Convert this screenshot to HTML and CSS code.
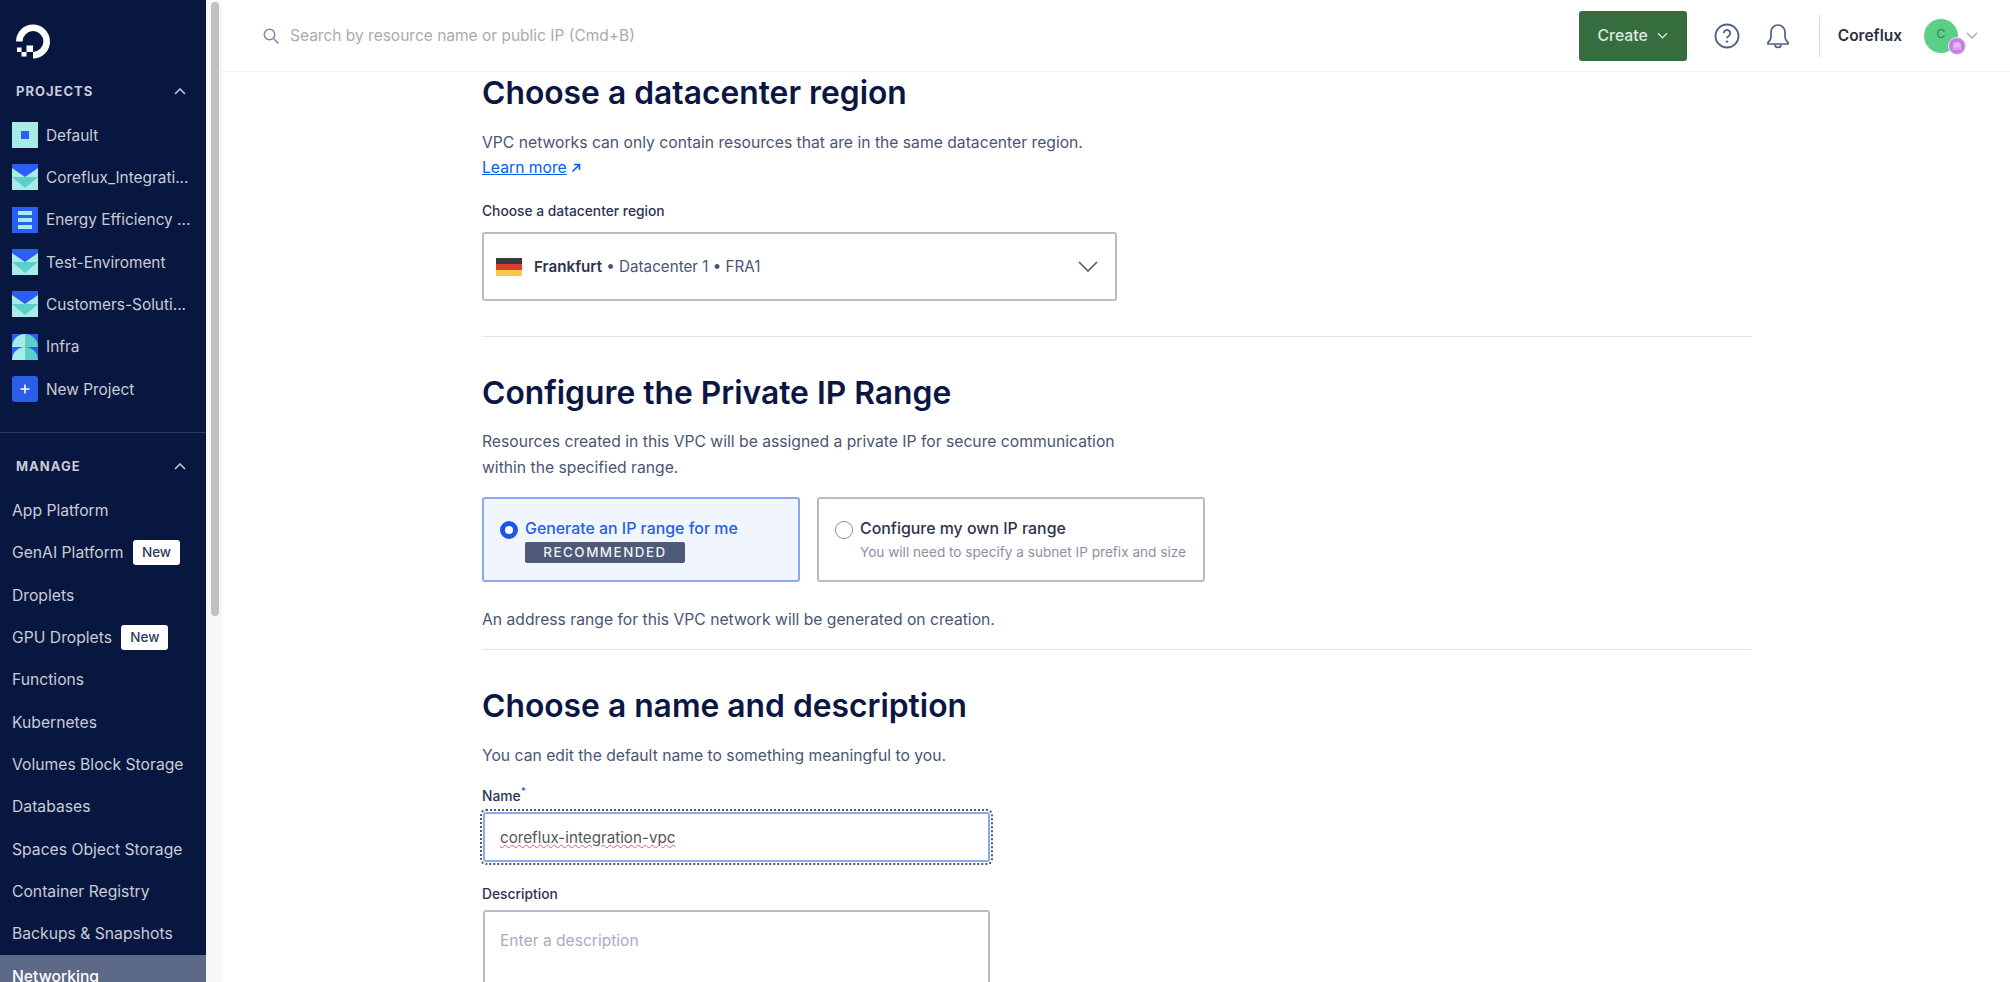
FILE: index.html
```html
<!DOCTYPE html>
<html lang="en">
<head>
    <meta charset="UTF-8">
    <meta name="viewport" content="width=device-width, initial-scale=1.0">
    <title>Create a VPC Network</title>
    <link rel="stylesheet" href="styles.css">
</head>
<body>
    <aside class="sidebar">
        <div class="logo">
            <svg width="34" height="35" viewBox="0 0 34 34"><path d="M17 34v-6.6A10.4 10.4 0 1 0 6.6 17H0a17 17 0 1 1 17 17z" fill="#fff"/><path d="M10.5 21h6.5v6.4h-6.5zM5.5 27.4h5v4.6h-5zM1 23h4.500v4.400H1z" fill="#fff"/></svg>
        </div>

        <section class="side-section side-projects">
            <div class="side-head">
                <span>PROJECTS</span>
                <svg class="side-chevron" width="12" height="7" viewBox="0 0 12 7"><path d="M1 6l5-5 5 5" fill="none" stroke="#c9ccd6" stroke-width="1.5"/></svg>
            </div>
            <a class="project">
                <svg class="project-icon" viewBox="0 0 26 26"><rect width="26" height="26" fill="#a8ece8"/><rect x="9" y="9" width="8" height="8" fill="#2a5ef5"/></svg>
                <span>Default</span>
            </a>
            <a class="project">
                <svg class="project-icon" viewBox="0 0 26 26"><rect width="26" height="26" fill="#a8ece8"/><path d="M0 0h26v4L13 13 0 4z" fill="#2a5ef5"/><path d="M0 13h26L13 24z" fill="#5ccfc8"/></svg>
                <span>Coreflux_Integrati...</span>
            </a>
            <a class="project">
                <svg class="project-icon" viewBox="0 0 26 26"><rect width="26" height="26" fill="#2a5ef5"/><path d="M6 4h14v4H6zM6 11h14v4H6zM6 18h14v4H6z" fill="#a8ece8"/></svg>
                <span>Energy Efficiency ...</span>
            </a>
            <a class="project">
                <svg class="project-icon" viewBox="0 0 26 26"><rect width="26" height="26" fill="#a8ece8"/><path d="M0 0h26v4L13 13 0 4z" fill="#2a5ef5"/><path d="M0 13h26L13 24z" fill="#5ccfc8"/></svg>
                <span>Test-Enviroment</span>
            </a>
            <a class="project">
                <svg class="project-icon" viewBox="0 0 26 26"><rect width="26" height="26" fill="#a8ece8"/><path d="M0 0h26v4L13 13 0 4z" fill="#2a5ef5"/><path d="M0 13h26L13 24z" fill="#5ccfc8"/></svg>
                <span>Customers-Soluti...</span>
            </a>
            <a class="project">
                <svg class="project-icon" viewBox="0 0 26 26"><rect width="26" height="26" fill="#2a5ef5"/><path d="M13 0A13 13 0 0 0 0 13h13z" fill="#a8ece8"/><path d="M13 0a13 13 0 0 1 13 13H13z" fill="#5ccfc8"/><path d="M0 26a13 13 0 0 1 13-13v13z" fill="#a8ece8"/><path d="M13 13a13 13 0 0 1 13 13H13z" fill="#5ccfc8"/></svg>
                <span>Infra</span>
            </a>
            <a class="project">
                <svg class="project-icon" viewBox="0 0 26 26"><rect width="26" height="26" rx="3" fill="#2a5ee8"/><path d="M13 8.500v9M8.500 13h9" stroke="#fff" stroke-width="1.6"/></svg>
                <span>New Project</span>
            </a>
        </section>

        <section class="side-section side-manage">
            <div class="side-head">
                <span>MANAGE</span>
                <svg class="side-chevron" width="12" height="7" viewBox="0 0 12 7"><path d="M1 6l5-5 5 5" fill="none" stroke="#c9ccd6" stroke-width="1.5"/></svg>
            </div>
            <a class="nav-item">App Platform</a>
            <a class="nav-item">GenAI Platform <span class="badge-new">New</span></a>
            <a class="nav-item">Droplets</a>
            <a class="nav-item">GPU Droplets <span class="badge-new">New</span></a>
            <a class="nav-item">Functions</a>
            <a class="nav-item">Kubernetes</a>
            <a class="nav-item">Volumes Block Storage</a>
            <a class="nav-item">Databases</a>
            <a class="nav-item">Spaces Object Storage</a>
            <a class="nav-item">Container Registry</a>
            <a class="nav-item">Backups &amp; Snapshots</a>
            <a class="nav-item active">Networking</a>
        </section>
    </aside>

    <div class="gutter"><div class="gutter-thumb"></div></div>

    <div class="main">
        <header class="topbar">
            <div class="search">
                <svg width="18" height="18" viewBox="0 0 18 18"><circle cx="7.500" cy="7.500" r="5.200" fill="none" stroke="#7a88aa" stroke-width="1.5"/><path d="M11.500 11.500l5 5" stroke="#7a88aa" stroke-width="1.5"/></svg>
                <span>Search by resource name or public IP (Cmd+B)</span>
            </div>
            <button class="create-btn">Create
                <svg width="11" height="7" viewBox="0 0 12 7"><path d="M1 1l5 5 5-5" fill="none" stroke="#d8e4da" stroke-width="1.4"/></svg>
            </button>
            <svg class="help-icon" width="26" height="26" viewBox="0 0 26 26"><circle cx="13" cy="13" r="11.500" fill="none" stroke="#4e5f85" stroke-width="1.8"/><path d="M9.800 10.200a3.200 3.200 0 1 1 4.900 2.700c-1.100.7-1.700 1.200-1.700 2.400" fill="none" stroke="#4e5f85" stroke-width="1.8"/><circle cx="13" cy="18.600" r="1.200" fill="#4e5f85"/></svg>
            <svg class="bell-icon" width="24" height="26" viewBox="0 0 24 26"><path d="M12 2a7 7 0 0 0-7 7v5c0 2.500-1.500 3.800-3 5.500V21h20v-1.500c-1.500-1.700-3-3-3-5.500V9a7 7 0 0 0-7-7z" fill="none" stroke="#4e5f85" stroke-width="1.7"/><path d="M9 21.500a3 3 0 0 0 6 0" fill="none" stroke="#4e5f85" stroke-width="1.7"/></svg>
            <div class="top-sep"></div>
            <span class="team">Coreflux</span>
            <div class="avatar">C
                <span class="avatar-sub">
                    <svg width="12" height="12" viewBox="0 0 12 12"><path d="M2 6a4 4 0 0 1 8 0v4H8.500V7.500h-1V10H6.500V7.500h-1V10H4.500V7.500h-1V10H2z" fill="#e3b6f5"/></svg>
                </span>
            </div>
            <svg class="avatar-chevron" width="12" height="7" viewBox="0 0 12 7"><path d="M1 1l5 5 5-5" fill="none" stroke="#a3abc0" stroke-width="1.4"/></svg>
        </header>

        <main class="content">
            <h2>Choose a datacenter region</h2>
            <p class="first-para">VPC networks can only contain resources that are in the same datacenter region.</p>
            <p><a class="link">Learn more</a> <svg width="10" height="10" viewBox="0 0 10 10"><path d="M1.500 8.500L8 2M3 1.500h5.500V7" fill="none" stroke="#0061eb" stroke-width="1.6"/></svg></p>

            <label class="field-label region-label">Choose a datacenter region</label>
            <div class="region-select">
                <span class="flag"><i class="flag-black"></i><i class="flag-red"></i><i class="flag-gold"></i></span>
                <span><b>Frankfurt</b> • Datacenter 1 • FRA1</span>
                <svg class="select-chevron" width="20" height="11" viewBox="0 0 20 11"><path d="M1 1l9 9 9-9" fill="none" stroke="#4e5a78" stroke-width="1.6"/></svg>
            </div>

            <hr>

            <h2>Configure the Private IP Range</h2>
            <p class="first-para ip-para">Resources created in this VPC will be assigned a private IP for secure communication<br>within the specified range.</p>

            <div class="radio-row">
                <div class="radio-card selected">
                    <span class="radio"></span>
                    <div>
                        <div class="radio-title">Generate an IP range for me</div>
                        <span class="recommended">RECOMMENDED</span>
                    </div>
                </div>
                <div class="radio-card">
                    <span class="radio"></span>
                    <div>
                        <div class="radio-title">Configure my own IP range</div>
                        <div class="radio-sub">You will need to specify a subnet IP prefix and size</div>
                    </div>
                </div>
            </div>

            <p class="address-note">An address range for this VPC network will be generated on creation.</p>

            <hr class="hr-tight">

            <h2>Choose a name and description</h2>
            <p class="first-para">You can edit the default name to something meaningful to you.</p>

            <label class="field-label name-label">Name<sup>*</sup></label>
            <div class="name-input"><span>coreflux-integration-vpc</span></div>

            <label class="field-label desc-label">Description</label>
            <div class="desc-input">Enter a description</div>
        </main>
    </div>
</body>
</html>
```

FILE: styles.css
```css
/* Global Styles */
* {
    margin: 0;
    padding: 0;
    box-sizing: border-box;
}

body {
    font-family: Inter, "Liberation Sans", sans-serif;
    background-color: #fff;
    color: #4a5573;
    display: flex;
    height: 100vh;
    overflow: hidden;
}

/* Sidebar */
.sidebar {
    width: 206px;
    flex-shrink: 0;
    background-color: #08173f;
    color: #c9ccd6;
    overflow: hidden;
}

.logo {
    height: 76px;
    padding: 24px 0 0 16px;
}

.side-section {
    border-bottom: 1px solid #2a3a63;
}

.side-projects {
    padding-bottom: 22px;
}

.side-manage {
    padding-top: 18px;
    border-bottom: 0;
}

.side-head {
    height: 30px;
    margin-bottom: 8px;
    padding: 0 20px 0 16px;
    display: flex;
    align-items: center;
    justify-content: space-between;
    font-size: 13px;
    font-weight: 700;
    letter-spacing: 1px;
}

.project {
    height: 42.33px;
    padding-left: 12px;
    display: flex;
    align-items: center;
    gap: 8px;
    font-size: 15.4px;
    white-space: nowrap;
}

.project-icon {
    width: 26px;
    height: 26px;
    flex-shrink: 0;
}

.nav-item {
    height: 42.33px;
    padding-left: 12px;
    display: flex;
    align-items: center;
    font-size: 15.7px;
    white-space: pre;
}

.nav-item.active {
    background-color: #5c6987;
    color: #fff;
    font-weight: 500;
}

.badge-new {
    margin-left: 5px;
    width: 47px;
    height: 25px;
    line-height: 25px;
    text-align: center;
    background-color: #fff;
    color: #2c3a5e;
    border-radius: 3px;
    font-size: 13.5px;
    font-weight: 500;
}

/* Scrollbar gutter */
.gutter {
    width: 16px;
    flex-shrink: 0;
    background-color: #f7f7f7;
    padding: 2px 3px 0 5px;
}

.gutter-thumb {
    height: 614px;
    background-color: #c1c1c1;
    border-radius: 4px;
}

/* Top bar */
.main {
    flex: 1;
    min-width: 0;
}

.topbar {
    height: 72px;
    border-bottom: 1px solid #f0f0f0;
    display: flex;
    align-items: center;
    padding-left: 40px;
    padding-right: 32px;
}

.search {
    flex: 1;
    display: flex;
    align-items: center;
    gap: 10px;
    font-size: 15.5px;
    color: #a9abb0;
}

.create-btn {
    width: 108px;
    height: 50px;
    border: 0;
    border-radius: 3px;
    background-color: #366d3e;
    color: #dfe9e0;
    font-family: inherit;
    font-size: 15.8px;
    font-weight: 500;
}

.create-btn svg {
    margin-left: 5px;
    vertical-align: 2px;
}

.help-icon {
    margin-left: 27px;
}

.bell-icon {
    margin-left: 26px;
}

.top-sep {
    width: 1px;
    height: 42px;
    margin-left: 29px;
    background-color: #d5d8e0;
}

.team {
    margin-left: 18px;
    font-size: 15.5px;
    font-weight: 600;
    color: #2b2f3a;
}

.avatar {
    position: relative;
    width: 34px;
    height: 34px;
    margin-left: 22px;
    border-radius: 50%;
    background-color: #5ccf87;
    color: #3a7a55;
    font-size: 12px;
    line-height: 30px;
    text-align: center;
}

.avatar-sub {
    position: absolute;
    right: -8px;
    bottom: -2px;
    width: 18px;
    height: 18px;
    border-radius: 50%;
    background-color: #c77ee8;
    border: 1px solid #f3e3fa;
    display: flex;
    align-items: center;
    justify-content: center;
}

.avatar-chevron {
    margin-left: 8px;
}

/* Content */
.content {
    padding-left: 260px;
    width: 1530px;
}

h2 {
    font-size: 31.8px;
    line-height: 42px;
    font-weight: 600;
    color: #0b1742;
}

p {
    font-size: 15.7px;
    line-height: 25px;
}

.first-para {
    margin-top: 16px;
}

.ip-para {
    line-height: 26px;
    margin-top: 15px;
}

.link {
    color: #0061eb;
    text-decoration: underline;
}

.field-label {
    display: block;
    font-size: 13.8px;
    line-height: 20px;
    font-weight: 500;
    color: #2c3350;
}

.region-label {
    margin-top: 21px;
}

.region-select {
    width: 635px;
    height: 69px;
    margin-top: 11px;
    border: 2px solid #b9bcc8;
    border-radius: 3px;
    padding: 0 17px 0 12px;
    display: flex;
    align-items: center;
    gap: 12px;
    font-size: 15.2px;
}

.region-select b {
    font-weight: 600;
    color: #2c3350;
}

.select-chevron {
    margin-left: auto;
}

.flag {
    width: 26px;
    height: 18px;
    display: flex;
    flex-direction: column;
}

.flag i {
    flex: 1;
}

.flag-black {
    background-color: #3a3a3a;
}

.flag-red {
    background-color: #d8402f;
}

.flag-gold {
    background-color: #f7c948;
}

hr {
    width: 1270px;
    height: 1px;
    margin: 35px 0;
    border: 0;
    background-color: #e3e5ea;
}

.hr-tight {
    margin-top: 17px;
}

.radio-row {
    display: flex;
    gap: 17px;
    margin-top: 16px;
}

.radio-card {
    width: 388px;
    height: 85px;
    border: 2px solid #b9bcc8;
    border-radius: 3px;
    padding: 20px 0 0 16px;
    display: flex;
    gap: 7px;
}

.radio-card.selected {
    width: 318px;
    background-color: #f1f6fe;
    border-color: #8aa8f5;
}

.radio {
    width: 18px;
    height: 18px;
    margin-top: 2px;
    border: 1.5px solid #8a8fa3;
    border-radius: 50%;
    background-color: #fff;
    flex-shrink: 0;
}

.selected .radio {
    border: 5px solid #1c55e8;
}

.radio-title {
    font-size: 15.9px;
    line-height: 20px;
    font-weight: 500;
    color: #2c3350;
}

.selected .radio-title {
    color: #2a5ee8;
}

.radio-sub {
    margin-top: 3px;
    font-size: 13.6px;
    line-height: 20px;
    color: #8b90a3;
}

.recommended {
    display: block;
    width: 160px;
    height: 21px;
    margin-top: 3px;
    line-height: 21px;
    text-align: center;
    background-color: #4e5a78;
    color: #f0f1f5;
    border-radius: 2px;
    font-size: 13.4px;
    font-weight: 500;
    letter-spacing: 1.5px;
}

.address-note {
    margin-top: 25px;
}

.name-label {
    margin-top: 18px;
}

sup {
    color: #2a5ee8;
    font-size: 10px;
    line-height: 0;
}

.name-input {
    width: 507px;
    height: 50px;
    margin: 6px 0 0 1px;
    border: 2px solid #8aa8f5;
    border-radius: 3px;
    outline: 2px dotted #4e5a78;
    outline-offset: 1px;
    padding-left: 15px;
    display: flex;
    align-items: center;
    font-size: 15.2px;
    color: #555;
}

.name-input span {
    text-decoration: underline wavy #e06060 1px;
}

.desc-label {
    margin-top: 22px;
}

.desc-input {
    width: 507px;
    height: 120px;
    margin: 6px 0 0 1px;
    border: 2px solid #b9bcc8;
    border-radius: 3px;
    padding: 19px 15px;
    font-size: 15.6px;
    color: #a6adc2;
}
```
